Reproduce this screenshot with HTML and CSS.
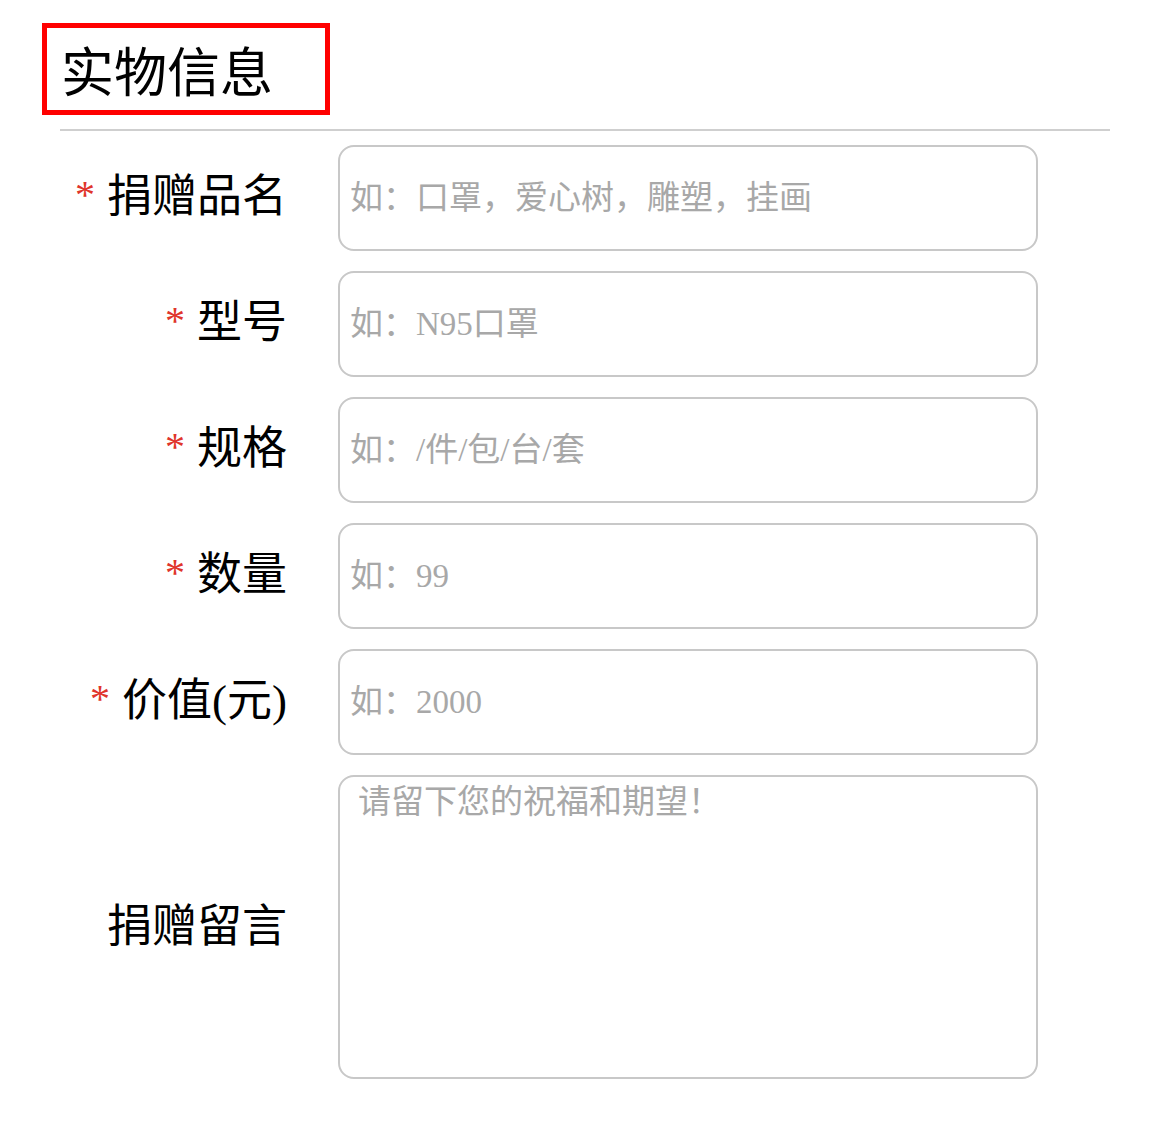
FILE: index.html
```html
<!DOCTYPE html>
<html lang="zh-CN">
<head>
  <meta charset="UTF-8">
  <title>实物信息</title>
  <link rel="stylesheet" href="styles.css">
</head>
<body>

  <div class="section-title">实物信息</div>
  <div class="divider"></div>

  <form class="goods-form">
    <label class="form-label"><span class="required">*</span>捐赠品名</label>
    <input class="form-input" type="text" placeholder="如：口罩，爱心树，雕塑，挂画">

    <label class="form-label"><span class="required">*</span>型号</label>
    <input class="form-input" type="text" placeholder="如：N95口罩">

    <label class="form-label"><span class="required">*</span>规格</label>
    <input class="form-input" type="text" placeholder="如：/件/包/台/套">

    <label class="form-label"><span class="required">*</span>数量</label>
    <input class="form-input" type="text" placeholder="如：99">

    <label class="form-label"><span class="required">*</span>价值(元)</label>
    <input class="form-input" type="text" placeholder="如：2000">

    <label class="form-label">捐赠留言</label>
    <textarea class="form-textarea" placeholder="请留下您的祝福和期望！"></textarea>
  </form>

</body>
</html>
```

FILE: styles.css
```css
body {
  margin: 0;
  padding: 0;
  background: #fff;
  font-family: "Liberation Serif", "Noto Sans CJK SC", serif;
  color: #000;
}

.section-title {
  display: inline-block;
  margin: 23px 0 0 42px;
  padding: 8px 52px 0 14px;
  height: 74px;
  line-height: 76px;
  border: 5px solid #f00;
  font-size: 53px;
}

.divider {
  margin: 14px 0 0 60px;
  width: 1050px;
  height: 2px;
  background: #cfcfcf;
}

.goods-form {
  display: grid;
  grid-template-columns: 287px 700px;
  column-gap: 51px;
  row-gap: 20px;
  margin-top: 14px;
  align-items: center;
}

.form-label {
  text-align: right;
  font-size: 45px;
  line-height: 50px;
}

.required {
  color: #e0352b;
  font-size: 40px;
  margin-right: 12px;
  position: relative;
  top: -4px;
}

.form-input,
.form-textarea {
  box-sizing: border-box;
  width: 700px;
  border: 2px solid #c8c8c8;
  border-radius: 16px;
  font-family: inherit;
  font-size: 33px;
  color: #333;
  background: #fff;
  outline: none;
}

.form-input {
  height: 106px;
  padding: 0 10px;
}

.form-textarea {
  height: 304px;
  padding: 5px 18px;
  line-height: 40px;
  resize: none;
}

.form-input::placeholder,
.form-textarea::placeholder {
  color: #a8a8a8;
}
```
